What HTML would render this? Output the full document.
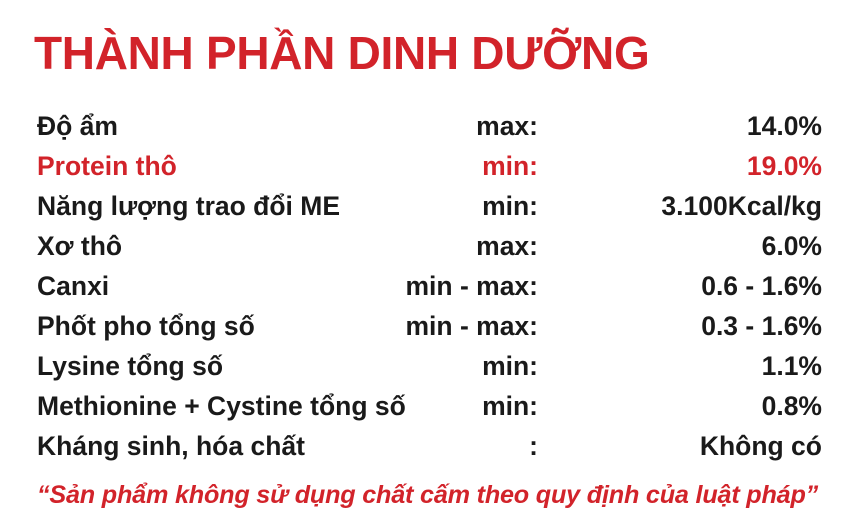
<!DOCTYPE html>
<html><head><meta charset="utf-8"><style>
html,body{margin:0;padding:0;background:#fff;width:859px;height:527px;overflow:hidden;position:relative;font-family:"Liberation Sans",Arial,sans-serif;font-weight:bold;color:#1a1a1a}
.t{position:absolute;left:34px;top:26px;font-size:46px;color:#d2232a;white-space:nowrap;letter-spacing:-0.3px}
.r{position:absolute;left:0;width:859px;height:30px;font-size:26.5px;white-space:nowrap}
.r span{position:absolute;top:0}
.a{left:37px}
.b{right:321px}
.c{right:37px}
.red{color:#d2232a}
.f{position:absolute;left:37px;top:481px;font-size:25.2px;font-style:italic;color:#d2232a;white-space:nowrap;letter-spacing:-0.2px}
</style></head><body>
<div class="t">THÀNH PHẦN DINH DƯỠNG</div>
<div class="r" style="top:111px"><span class="a">Độ ẩm</span><span class="b">max:</span><span class="c">14.0%</span></div>
<div class="r red" style="top:151px"><span class="a">Protein thô</span><span class="b">min:</span><span class="c">19.0%</span></div>
<div class="r" style="top:191px"><span class="a">Năng lượng trao đổi ME</span><span class="b">min:</span><span class="c">3.100Kcal/kg</span></div>
<div class="r" style="top:231px"><span class="a">Xơ thô</span><span class="b">max:</span><span class="c">6.0%</span></div>
<div class="r" style="top:271px"><span class="a">Canxi</span><span class="b">min - max:</span><span class="c">0.6 - 1.6%</span></div>
<div class="r" style="top:311px"><span class="a">Phốt pho tổng số</span><span class="b">min - max:</span><span class="c">0.3 - 1.6%</span></div>
<div class="r" style="top:351px"><span class="a">Lysine tổng số</span><span class="b">min:</span><span class="c">1.1%</span></div>
<div class="r" style="top:391px"><span class="a">Methionine + Cystine tổng số</span><span class="b">min:</span><span class="c">0.8%</span></div>
<div class="r" style="top:431px"><span class="a">Kháng sinh, hóa chất</span><span class="b">:</span><span class="c">Không có</span></div>
<div class="f">“Sản phẩm không sử dụng chất cấm theo quy định của luật pháp”</div>
</body></html>
